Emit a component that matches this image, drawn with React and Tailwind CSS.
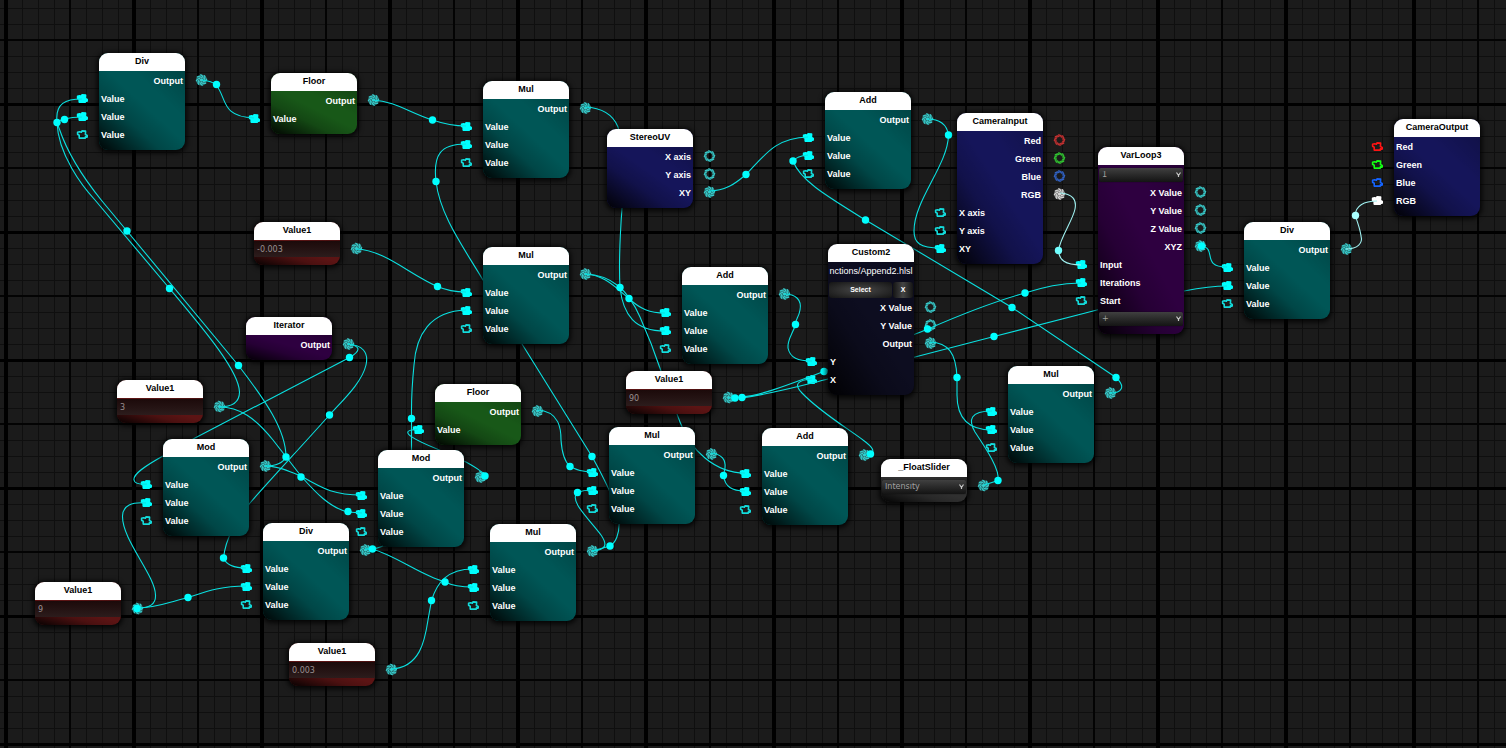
import React from "react";

const THEMES = {
  teal: "bg-[#005656]",
  green: "bg-[#185818]",
  navy: "bg-[#15155a]",
  purple: "bg-[#2e0040]",
  red: "bg-[#5c1414]",
  ink: "bg-[#0d0d20]",
  gray: "bg-[#303030]",
};

const out = (label = "Output", color) => ({ kind: "out", label, color });
const inp = (label = "Value", on = true, color) => ({ kind: "in", label, on, color });
const math = (a = true, b = true) => [
  { ...out(), on: true },
  inp("Value", a),
  inp("Value", b),
  inp("Value", false),
];
const on = (row) => ({ ...row, on: true });

const NODES = [
  { id: "div1", x: 99, y: 53, title: "Div", theme: "teal", rows: math() },
  { id: "floor1", x: 271, y: 73, title: "Floor", theme: "green", rows: [on(out()), inp()] },
  { id: "mul1", x: 483, y: 81, title: "Mul", theme: "teal", rows: math() },
  { id: "stereo", x: 607, y: 129, title: "StereoUV", theme: "navy", rows: [out("X axis"), out("Y axis"), on(out("XY"))] },
  { id: "add1", x: 825, y: 92, title: "Add", theme: "teal", rows: math() },
  {
    id: "camin", x: 957, y: 113, title: "CameraInput", theme: "navy",
    rows: [out("Red", "#c83232"), out("Green", "#32c832"), out("Blue", "#3264c8"), on(out("RGB", "#d8d8d8")), inp("X axis", false), inp("Y axis", false), inp("XY")],
  },
  {
    id: "loop", x: 1098, y: 147, title: "VarLoop3", theme: "purple",
    rows: [
      { kind: "select", label: "Loop index", value: "1" },
      out("X Value"), out("Y Value"), out("Z Value"), on(out("XYZ")),
      inp("Input"), inp("Iterations"), inp("Start", false),
      { kind: "select", label: "Add variable", value: "+" },
    ],
  },
  { id: "div3", x: 1244, y: 222, title: "Div", theme: "teal", rows: math() },
  {
    id: "camout", x: 1394, y: 119, title: "CameraOutput", theme: "navy",
    rows: [inp("Red", false, "#ff1414"), inp("Green", false, "#14ff14"), inp("Blue", false, "#1464ff"), inp("RGB", true, "#ffffff")],
  },
  { id: "valneg", x: 254, y: 222, title: "Value1", theme: "red", rows: [{ kind: "field", value: "-0.003" }] },
  { id: "mul2", x: 483, y: 247, title: "Mul", theme: "teal", rows: math() },
  { id: "add2", x: 682, y: 267, title: "Add", theme: "teal", rows: math() },
  {
    id: "custom", x: 828, y: 244, title: "Custom2", theme: "ink",
    rows: [{ kind: "file", value: "nctions/Append2.hlsl" }, { kind: "buttons" }, out("X Value"), out("Y Value"), on(out()), inp("Y"), inp("X")],
  },
  { id: "iter", x: 246, y: 317, title: "Iterator", theme: "purple", rows: [on(out())] },
  { id: "val3", x: 117, y: 380, title: "Value1", theme: "red", rows: [{ kind: "field", value: "3" }] },
  { id: "floor2", x: 435, y: 384, title: "Floor", theme: "green", rows: [on(out()), inp()] },
  { id: "mod1", x: 163, y: 439, title: "Mod", theme: "teal", rows: math() },
  { id: "mod2", x: 378, y: 450, title: "Mod", theme: "teal", rows: math() },
  { id: "val90", x: 626, y: 371, title: "Value1", theme: "red", rows: [{ kind: "field", value: "90" }] },
  { id: "mul3", x: 609, y: 427, title: "Mul", theme: "teal", rows: math() },
  { id: "add3", x: 762, y: 428, title: "Add", theme: "teal", rows: math() },
  { id: "slider", x: 881, y: 459, title: "_FloatSlider", theme: "gray", rows: [{ kind: "select", label: "Property", value: "Intensity", port: true }] },
  { id: "mul5", x: 1008, y: 366, title: "Mul", theme: "teal", rows: math() },
  { id: "div2", x: 263, y: 523, title: "Div", theme: "teal", rows: math() },
  { id: "mul4", x: 490, y: 524, title: "Mul", theme: "teal", rows: math() },
  { id: "val9", x: 35, y: 582, title: "Value1", theme: "red", rows: [{ kind: "field", value: "9" }] },
  { id: "val003", x: 289, y: 643, title: "Value1", theme: "red", rows: [{ kind: "field", value: "0.003" }] },
];

const WIRES = [
  "M202,80 Q212,81 216,85 C227,97 220,117 254,118",
  "M82,99 C66,99 55,103 57,122 C58,155 83,187 95,200 L169.5,288.5 C200,325 239,370 239.5,392 C239.5,402 232,407 219,407",
  "M82,117 Q72,117 64.5,119 C56,121 57,123 59,128 C68,155 85,180 102,201 L127,231 L238.5,365.5 C265,400 286,430 286,457 C283,463 276,466 265,466",
  "M373,100 C395,101 410,113 432.5,120 Q450,126 466,126",
  "M466,144 C440,144 433,155 436,181.5 C440,215 462,245 483,280 L522,344 L592,456.5 C605,480 618,505 619,520 C620,535 615,543 610,546 L592,551",
  "M585,107 C605,108 614,117 618,127 C625,150 624,180 622,208 C619,250 619,270 620,287.5 C623,315 635,331 665,331",
  "M585,274 C605,275 616,288 629,298.5 C640,309 650,313 665,313",
  "M585,274 C612,275 628,290 640,317 C648,335 654,350 661,371 L680,422 C690,450 715,473 745,473",
  "M356,249 C385,250 410,275 437.5,286.5 Q450,292 466,292",
  "M466,310 C430,311 416,335 414,365 C411,395 411.5,400 411.5,418.5 V470 C408,520 400,545 372.5,549 L365,549",
  "M709,191 C725,191 735,184 746,174.5 C765,155 775,138 808,137",
  "M808,155 Q797,156 793,161 C800,180 825,195 865.5,220 L1012,307.5 L1116,377.5 C1126,387 1122,393 1110,393",
  "M927,119 C940,119 947,125 948.5,135 C948,165 914,200 914,231 C914,243 920,248 940,248",
  "M728,398 L742,397 C765,395 800,380 824,371.5 C860,358 895,342 928,329 C960,315 1000,300 1025,293 C1045,287 1060,283 1081,283",
  "M742,398 C780,392 800,386 828,379 L915,357 L994,336.5 L1097,310 C1130,302 1150,297 1184,291 Q1210,286 1227,286",
  "M1201,246 C1218,248 1200,267 1227,267",
  "M784,294 C796,294 802,300 800,310 C799,317 795,320 795.5,324.5 C793,333 787,340 788,348 C790,358 798,361 812,361",
  "M812,379 C798,380 793,384 802,393 C820,412 850,430 863,440 C874,448 875,452 870,454 H864",
  "M930,342 C948,343 956,352 957,377.5 V395 C957,415 965,430 992,430",
  "M984,485 L998,480.5 C1000,470 987,450 975,432 C968,420 970,411 992,411",
  "M348,344 C360,346 362,350 349.5,357.5 L195,438 L163,456 C145,466 133,474 134,480 Q135,485 147,484",
  "M348,344 C362,345 369,352 366,365 C362,382 345,398 329.5,415 C300,448 270,480 250,503 C238,520 226,535 223.5,558 C226,564 232,568 246,568",
  "M219,407 C240,407 255,418 273,440 L301,476 C315,492 330,508 348,512 L362,513",
  "M265,466 C280,466 290,472 301,476 C325,490 335,495 362,495",
  "M481,476 L485,476 Q484,472 466,462 L437,449 C415,440 400,432 412,430 L418,429",
  "M537,410 C560,411 561,430 561,440 C562,455 565,462 570,466.5 C577,470 582,472 593,472",
  "M593,490 Q583,490 577.5,492.5 C568,500 590,520 601,535 C608,545 606,550 592,551",
  "M711,453 C722,454 726,460 725,468 L723.5,475.5 C725,487 732,491 745,491",
  "M138,608 C150,608 156,604 155.5,595 C155,575 122,540 122.5,516 C123,505 132,502 146,503",
  "M138,608 C155,608 170,602 188,597.5 C205,592 220,586 246,586",
  "M365,549 H372 C395,555 420,575 445,582 Q455,587 473,587",
  "M391,669 C420,668 425,640 428,620 L431.5,600.5 C437,583 447,569 473,569",
];

const PALE_WIRES = [
  "M1060,193 C1072,194 1077,199 1075,209 C1073,220 1060,238 1058.5,250.5 C1059,260 1065,265 1081,265",
  "M1346,249 C1358,249 1363,243 1361,236 C1360,228 1357,222 1355.5,215.5 C1355,206 1364,201 1377,201",
];

const KNOTS = [
  [216.5, 84.5], [57, 122.5], [64.5, 119.5], [432.5, 120], [436, 181.5], [746, 174.5], [793, 161], [948.5, 135],
  [865.5, 220], [1025, 293], [1012, 307.5], [927.5, 329], [994, 336.5], [824, 371.5],
  [1201.5, 246], [127, 231], [169.5, 288.5], [238.5, 365.5], [437.5, 286.5], [620, 287.5], [629, 298.5],
  [795.5, 324.5], [349.5, 357.5], [329.5, 415], [411.5, 418.5], [286, 457], [301, 477], [348, 511.5],
  [223.5, 558], [188, 597.5], [137, 608.5], [372.5, 549], [445, 582], [431.5, 600.5], [485, 476],
  [570, 466.5], [592, 456.5], [577.5, 492.5], [610, 546], [723.5, 475.5], [735, 398], [742, 397.5],
  [870.5, 454], [998, 480.5], [957, 377.5], [1116, 377.5],
];
const PALE_KNOTS = [[1058.5, 250.5, "#70ffff"], [1355.5, 215.5, "#aaffff"]];

const BLADES = [0, 45, 90, 135, 180, 225, 270, 315];

function Aperture({ x, y, color = "#38cccc", active }) {
  return (
    <g transform={`translate(${x} ${y})`} stroke={color} fill="none">
      <circle r="4.2" strokeWidth="2.6" strokeOpacity="0.5" />
      {BLADES.map((a) => (
        <path
          key={a}
          transform={`rotate(${a})`}
          d={active ? "M-1.2,-5.4 Q1.6,-4.4 1.8,-1" : "M-1.2,-5.4 Q1.6,-4.8 2.2,-2.6"}
          strokeWidth="1.1"
        />
      ))}
      {active && <circle r="1.7" fill={color} stroke="none" />}
    </g>
  );
}

function MovieCamera({ x, y, color = "#00ffff", active }) {
  const tone = !active && color === "#00ffff" ? "#14dcdc" : color;
  return (
    <path
      transform={`translate(${x} ${y})`}
      d="M-4.4,-2.2 L-2.4,-2.8 L-0.6,-2.2 L0,-3.6 L3.6,-3.4 L3.4,0 L5.2,1 V2.6 L3.4,2.2 V3.6 H-2.8 V0.8 L-4.4,-0.2 Z"
      fill={active ? color : "none"}
      stroke={tone}
      strokeWidth="1.6"
      strokeLinejoin="round"
    />
  );
}

function Wiring() {
  return (
    <svg className="absolute inset-0 h-full w-full" aria-hidden="true">
      {NODES.flatMap((n) =>
        n.rows.map((r, i) => {
          const key = n.id + i;
          const y = n.y + 27 + 18 * i;
          if (r.kind === "in") return <MovieCamera key={key} x={n.x - 17} y={y + 0.5} color={r.color} active={r.on} />;
          if (r.kind === "out" || r.kind === "field" || r.port)
            return <Aperture key={key} x={n.x + 102.5} y={r.kind === "out" ? y : y - 0.5} color={r.color} active={r.kind !== "out" || r.on} />;
          return null;
        })
      )}
      <g fill="none" stroke="#0ae0e0" strokeWidth="1.1">
        {WIRES.map((d) => <path key={d} d={d} />)}
      </g>
      <g fill="none" stroke="#9ff0f0" strokeWidth="1.1">
        {PALE_WIRES.map((d) => <path key={d} d={d} />)}
      </g>
      {KNOTS.map(([x, y]) => <circle key={`${x}-${y}`} cx={x} cy={y} r="3.7" fill="#00ffff" />)}
      {PALE_KNOTS.map(([x, y, c]) => <circle key={x} cx={x} cy={y} r="3.7" fill={c} />)}
    </svg>
  );
}

function Row({ row, title }) {
  switch (row.kind) {
    case "out":
      return <div className="flex h-[18px] items-center justify-end px-[2px]">{row.label}</div>;
    case "in":
      return <div className="flex h-[18px] items-center px-[2px]">{row.label}</div>;
    case "field":
      return (
        <div className="h-[18px]">
          <input
            aria-label={title}
            defaultValue={row.value}
            className="block h-4 w-full bg-linear-to-b from-[#1c0a0a] to-[#2c1c1c] px-[3px] font-['DejaVu_Sans',sans-serif] text-[8px] font-normal text-[#9a9090] outline-none"
          />
        </div>
      );
    case "select":
      return (
        <div className="relative flex h-[18px] items-center px-px pb-px">
          <select
            aria-label={row.label}
            className="h-[14px] w-full appearance-none rounded-[2px] bg-linear-to-b from-[#404040] to-[#141414] px-[3px] font-['DejaVu_Sans',sans-serif] text-[8px] font-normal text-[#a0a0a0] shadow-[0_0_1px_#000] outline-none"
          >
            <option>{row.value}</option>
          </select>
          <svg className="pointer-events-none absolute right-[3px] h-[6px] w-[5px]" viewBox="0 0 5 6" aria-hidden="true">
            <path d="M0.5,0.5 L2.5,3.5 L4.5,0.5 M2.5,3 V5" fill="none" stroke="#c8c8c8" strokeWidth="1.2" />
          </svg>
        </div>
      );
    case "file":
      return <div className="flex h-[18px] justify-center leading-4 font-normal whitespace-nowrap">{row.value}</div>;
    default:
      return (
        <div className="flex h-[18px] items-center gap-px px-px pb-px text-[7px]">
          <button className="h-4 flex-1 rounded-[3px] bg-[radial-gradient(ellipse_at_center,#484848,#141414)]">Select</button>
          <button aria-label="Clear" className="h-4 w-5 rounded-[3px] bg-[linear-gradient(90deg,#141414,#444,#141414)]">X</button>
        </div>
      );
  }
}

function Node({ node }) {
  return (
    <section
      className={`absolute w-[86px] overflow-hidden rounded-[9px] shadow-[0_1px_5px_2px_rgba(0,0,0,0.8)] ${THEMES[node.theme]}`}
      style={{ left: node.x, top: node.y }}
    >
      <h2 className="flex h-[18px] items-center justify-center bg-white pb-px text-black">{node.title}</h2>
      <div className="bg-[linear-gradient(to_top_right,rgba(0,0,0,0.95),rgba(0,0,0,0.55)_18%,rgba(0,0,0,0.18)_36%,transparent_55%,transparent_70%,rgba(0,0,0,0.2))] pt-px pb-[6px]">
        {node.rows.map((row, i) => <Row key={i} row={row} title={node.title} />)}
      </div>
    </section>
  );
}

export default function App() {
  return (
    <main className="relative min-h-screen w-full overflow-hidden bg-[#1b1b1b] bg-[linear-gradient(#000_3px,transparent_3px),linear-gradient(90deg,#000_4px,transparent_4px),linear-gradient(#030303_2px,transparent_2px),linear-gradient(90deg,#030303_2px,transparent_2px),linear-gradient(#0f0f0f_1px,transparent_1px),linear-gradient(90deg,#0f0f0f_1px,transparent_1px)] [background-size:128px_128px,128px_128px,64px_64px,64px_64px,16px_16px,16px_16px] [background-position:0_103px,4px_0,0_39px,69px_0,0_8px,6px_0] font-['Liberation_Sans',Arial,sans-serif] text-[9px] leading-none font-bold text-white">
      <Wiring />
      {NODES.map((node) => <Node key={node.id} node={node} />)}
    </main>
  );
}
